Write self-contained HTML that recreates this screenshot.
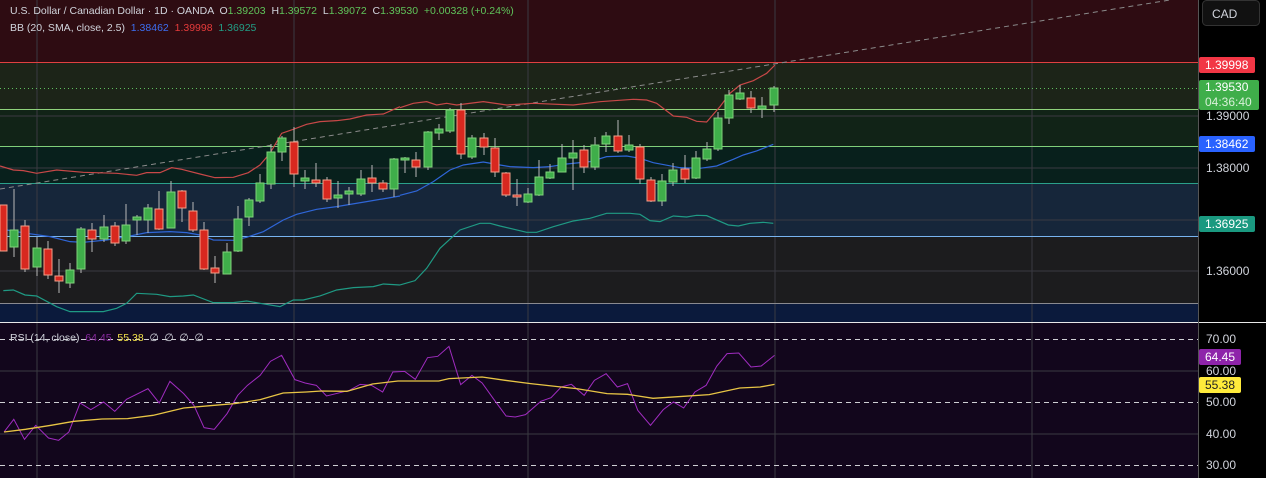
<!DOCTYPE html>
<html><head><meta charset="utf-8"><style>
body{margin:0;width:1266px;height:478px;overflow:hidden;background:#000;font-family:"Liberation Sans",sans-serif;}
svg{position:absolute;left:0;top:0}
.t{position:absolute;font-size:10.5px;color:#d1d4dc;white-space:nowrap}
.lb{position:absolute;left:1199px;font-size:12px;color:#fff;padding:0 0 0 6px;border-radius:2px;line-height:16px;height:16px}
.ax{position:absolute;left:1206px;font-size:12px;color:#d1d4dc;line-height:14px}
.g{fill:#3fae4a;stroke:#7fd27a}.r{fill:#d8281f;stroke:#f3a08a}
.w{stroke:#b8b8b8;stroke-width:1}
</style></head><body>
<svg width="1266" height="478" viewBox="0 0 1266 478">
<rect x="0" y="0" width="1198" height="62" fill="#2e0c12"/>
<rect x="0" y="62" width="1198" height="47" fill="#1c2418"/>
<rect x="0" y="109" width="1198" height="37" fill="#112317"/>
<rect x="0" y="146" width="1198" height="37" fill="#08201c"/>
<rect x="0" y="183" width="1198" height="53" fill="#16263a"/>
<rect x="0" y="236" width="1198" height="67" fill="#1c1c1e"/>
<rect x="0" y="303" width="1198" height="19" fill="#0b1a3c"/>
<rect x="0" y="323" width="1198" height="155" fill="#12061c"/>
<g stroke="#3a3a42" stroke-width="1">
<line x1="37" y1="0" x2="37" y2="478"/><line x1="294" y1="0" x2="294" y2="478"/><line x1="528" y1="0" x2="528" y2="478"/><line x1="775" y1="0" x2="775" y2="478"/><line x1="1032" y1="0" x2="1032" y2="478"/>
<line x1="0" y1="116" x2="1198" y2="116"/><line x1="0" y1="168" x2="1198" y2="168"/><line x1="0" y1="220" x2="1198" y2="220"/><line x1="0" y1="271" x2="1198" y2="271"/>
<line x1="0" y1="371" x2="1198" y2="371"/><line x1="0" y1="434" x2="1198" y2="434"/>
</g>
<line x1="0" y1="62.5" x2="1198" y2="62.5" stroke="#e04040"/>
<line x1="0" y1="109.5" x2="1198" y2="109.5" stroke="#8fd27c"/>
<line x1="0" y1="146.5" x2="1198" y2="146.5" stroke="#7fcf7a"/>
<line x1="0" y1="183.5" x2="1198" y2="183.5" stroke="#2aa08a"/>
<line x1="0" y1="236.5" x2="1198" y2="236.5" stroke="#78b4f0"/>
<line x1="0" y1="303.5" x2="1198" y2="303.5" stroke="#8a8a90"/>
<line x1="0" y1="88.5" x2="1198" y2="88.5" stroke="#5fbf5f" stroke-dasharray="1 3"/>
<line x1="0" y1="189" x2="1170" y2="0" stroke="#8a8a8a" stroke-dasharray="5 4"/>
<g fill="none" stroke-width="1.2">
<g transform="translate(0,40) scale(0.3333)">
<polyline vector-effect="non-scaling-stroke" stroke="#c84848" points="0,378 40,390 70,392 110,400 170,390 250,397 350,400 410,406 440,398 480,398 515,383 545,388 600,402 645,413 700,412 745,398 780,375 810,340 845,280 880,268 920,253 960,245 1010,242 1050,237 1100,225 1150,222 1200,200"/>
<polyline vector-effect="non-scaling-stroke" stroke="#2f66d8" points="20,570 80,580 150,590 210,605 250,607 320,600 380,590 440,578 510,575 560,578 600,585 640,600 700,601 740,592 790,575 850,540 890,523 950,508 1010,500 1100,485 1200,468"/>
<polyline vector-effect="non-scaling-stroke" stroke="#1f9a84" points="10,752 40,750 75,765 110,768 170,800 210,815 310,815 350,805 380,790 410,760 470,763 510,770 550,768 580,765 640,788 700,788 740,783 780,790 840,800 880,780 910,780 960,768 1010,750 1060,743 1120,740 1150,732 1200,735"/>
</g>
<g transform="translate(400,40) scale(0.3333)">
<polyline vector-effect="non-scaling-stroke" stroke="#c84848" points="0,203 40,190 80,185 110,195 140,190 170,195 250,185 320,195 400,190 520,195 600,185 700,178 740,180 770,190 820,228 860,232 890,244 920,246 960,200 990,160 1020,135 1060,122 1100,100 1125,75"/>
<polyline vector-effect="non-scaling-stroke" stroke="#2f66d8" points="0,466 50,453 100,425 150,390 190,375 250,366 300,375 330,380 400,383 450,380 500,372 570,365 620,350 680,348 720,355 760,368 840,383 900,385 950,378 1000,358 1030,345 1070,333 1120,313"/>
<polyline vector-effect="non-scaling-stroke" stroke="#1f9a84" points="0,735 45,722 80,685 120,625 180,570 240,550 270,550 300,558 380,577 410,577 460,560 520,543 570,535 620,520 690,520 720,523 750,542 780,545 820,528 860,531 890,526 920,527 950,540 985,555 1015,558 1050,550 1090,547 1120,550"/>
</g>
</g>
<g class="w">
<line x1="14" y1="189" x2="14" y2="257"/><line x1="25" y1="220" x2="25" y2="272"/><line x1="37" y1="237" x2="37" y2="276"/><line x1="48" y1="241" x2="48" y2="279"/><line x1="59" y1="259" x2="59" y2="293"/><line x1="70" y1="263" x2="70" y2="288"/><line x1="81" y1="227" x2="81" y2="273"/><line x1="92" y1="223" x2="92" y2="252"/><line x1="104" y1="215" x2="104" y2="242"/><line x1="115" y1="222" x2="115" y2="246"/><line x1="126" y1="204" x2="126" y2="244"/><line x1="137" y1="215" x2="137" y2="235"/><line x1="148" y1="204" x2="148" y2="233"/><line x1="159" y1="191" x2="159" y2="230"/><line x1="171" y1="181" x2="171" y2="228"/><line x1="182" y1="190" x2="182" y2="222"/><line x1="193" y1="202" x2="193" y2="232"/><line x1="204" y1="222" x2="204" y2="270"/><line x1="215" y1="256" x2="215" y2="283"/><line x1="227" y1="243" x2="227" y2="274"/><line x1="238" y1="206" x2="238" y2="252"/><line x1="249" y1="198" x2="249" y2="226"/><line x1="260" y1="174" x2="260" y2="203"/><line x1="271" y1="144" x2="271" y2="189"/><line x1="282" y1="136" x2="282" y2="161"/><line x1="294" y1="127" x2="294" y2="187"/><line x1="305" y1="170" x2="305" y2="189"/><line x1="316" y1="163" x2="316" y2="187"/><line x1="327" y1="177" x2="327" y2="202"/><line x1="338" y1="181" x2="338" y2="208"/><line x1="349" y1="187" x2="349" y2="205"/><line x1="361" y1="170" x2="361" y2="196"/><line x1="372" y1="165" x2="372" y2="192"/><line x1="383" y1="180" x2="383" y2="192"/><line x1="394" y1="158" x2="394" y2="197"/>
<line x1="405" y1="157" x2="405" y2="173"/><line x1="416" y1="152" x2="416" y2="177"/><line x1="428" y1="131" x2="428" y2="170"/><line x1="439" y1="124" x2="439" y2="140"/><line x1="450" y1="108" x2="450" y2="133"/><line x1="461" y1="103" x2="461" y2="159"/><line x1="472" y1="135" x2="472" y2="159"/><line x1="484" y1="133" x2="484" y2="155"/><line x1="495" y1="138" x2="495" y2="177"/><line x1="506" y1="172" x2="506" y2="197"/><line x1="517" y1="179" x2="517" y2="206"/><line x1="528" y1="188" x2="528" y2="203"/><line x1="539" y1="160" x2="539" y2="196"/><line x1="550" y1="164" x2="550" y2="179"/><line x1="562" y1="144" x2="562" y2="172"/><line x1="573" y1="140" x2="573" y2="190"/><line x1="584" y1="145" x2="584" y2="173"/><line x1="595" y1="137" x2="595" y2="170"/><line x1="606" y1="132" x2="606" y2="152"/><line x1="618" y1="120" x2="618" y2="153"/><line x1="629" y1="135" x2="629" y2="152"/><line x1="640" y1="144" x2="640" y2="184"/><line x1="651" y1="177" x2="651" y2="202"/><line x1="662" y1="174" x2="662" y2="206"/><line x1="673" y1="163" x2="673" y2="186"/><line x1="685" y1="155" x2="685" y2="183"/><line x1="696" y1="151" x2="696" y2="179"/><line x1="707" y1="142" x2="707" y2="161"/><line x1="718" y1="112" x2="718" y2="151"/><line x1="729" y1="90" x2="729" y2="124"/><line x1="740" y1="85" x2="740" y2="100"/><line x1="751" y1="91" x2="751" y2="113"/><line x1="762" y1="97" x2="762" y2="118"/><line x1="774" y1="86" x2="774" y2="112"/>
</g>
<g stroke-width="1">
<rect class="r" x="0" y="205" width="7" height="46"/>
<rect class="g" x="10" y="230" width="8" height="17"/><rect class="r" x="21" y="226" width="8" height="43"/><rect class="g" x="33" y="248" width="8" height="19"/><rect class="r" x="44" y="249" width="8" height="26"/><rect class="r" x="55" y="276" width="8" height="5"/><rect class="g" x="66" y="270" width="8" height="13"/><rect class="g" x="77" y="229" width="8" height="40"/><rect class="r" x="88" y="230" width="8" height="9"/><rect class="g" x="100" y="227" width="8" height="12"/><rect class="r" x="111" y="226" width="8" height="17"/><rect class="g" x="122" y="225" width="8" height="16"/><rect class="g" x="133" y="217" width="8" height="3"/><rect class="g" x="144" y="208" width="8" height="12"/><rect class="r" x="155" y="209" width="8" height="20"/><rect class="g" x="167" y="192" width="8" height="36"/><rect class="r" x="178" y="191" width="8" height="17"/><rect class="r" x="189" y="211" width="8" height="19"/><rect class="r" x="200" y="230" width="8" height="39"/><rect class="r" x="211" y="268" width="8" height="5"/><rect class="g" x="223" y="252" width="8" height="22"/><rect class="g" x="234" y="219" width="8" height="32"/><rect class="g" x="245" y="200" width="8" height="17"/><rect class="g" x="256" y="183" width="8" height="18"/><rect class="g" x="267" y="152" width="8" height="32"/><rect class="g" x="278" y="138" width="8" height="14"/><rect class="r" x="290" y="142" width="8" height="32"/><rect class="g" x="301" y="178" width="8" height="3"/><rect class="r" x="312" y="180" width="8" height="3"/><rect class="r" x="323" y="180" width="8" height="19"/><rect class="g" x="334" y="195" width="8" height="3"/><rect class="g" x="345" y="191" width="8" height="3"/><rect class="g" x="357" y="179" width="8" height="15"/><rect class="r" x="368" y="178" width="8" height="5"/><rect class="r" x="379" y="183" width="8" height="6"/><rect class="g" x="390" y="159" width="8" height="30"/>
<rect class="g" x="401" y="158" width="8" height="2"/><rect class="r" x="412" y="160" width="8" height="7"/><rect class="g" x="424" y="132" width="8" height="35"/><rect class="g" x="435" y="129" width="8" height="4"/><rect class="g" x="446" y="110" width="8" height="21"/><rect class="r" x="457" y="110" width="8" height="44"/><rect class="g" x="468" y="138" width="8" height="19"/><rect class="r" x="480" y="138" width="8" height="9"/><rect class="r" x="491" y="148" width="8" height="24"/><rect class="r" x="502" y="173" width="8" height="22"/><rect class="r" x="513" y="195" width="8" height="2"/><rect class="g" x="524" y="194" width="8" height="8"/><rect class="g" x="535" y="177" width="8" height="18"/><rect class="g" x="546" y="172" width="8" height="6"/><rect class="g" x="558" y="158" width="8" height="14"/><rect class="g" x="569" y="153" width="8" height="5"/><rect class="r" x="580" y="150" width="8" height="17"/><rect class="g" x="591" y="145" width="8" height="22"/><rect class="g" x="602" y="136" width="8" height="8"/><rect class="r" x="614" y="136" width="8" height="15"/><rect class="g" x="625" y="145" width="8" height="5"/><rect class="r" x="636" y="147" width="8" height="32"/><rect class="r" x="647" y="180" width="8" height="21"/><rect class="g" x="658" y="181" width="8" height="20"/><rect class="g" x="669" y="170" width="8" height="12"/><rect class="r" x="681" y="169" width="8" height="10"/><rect class="g" x="692" y="158" width="8" height="20"/><rect class="g" x="703" y="149" width="8" height="10"/><rect class="g" x="714" y="118" width="8" height="31"/><rect class="g" x="725" y="95" width="8" height="23"/><rect class="g" x="736" y="93" width="8" height="6"/><rect class="r" x="747" y="98" width="8" height="10"/><rect class="g" x="758" y="106" width="8" height="3"/><rect class="g" x="770" y="88" width="8" height="17"/>
</g>
<g stroke="#cfcfd4" stroke-dasharray="5 4"><line x1="0" y1="339.5" x2="1198" y2="339.5"/><line x1="0" y1="402.5" x2="1198" y2="402.5"/><line x1="0" y1="465.5" x2="1198" y2="465.5"/></g>
<g fill="none" transform="translate(0,322) scale(0.5102,0.3333)">
<polyline vector-effect="non-scaling-stroke" stroke="#a02cc0" stroke-width="1" points="8,330 27,292 48,352 70,310 95,348 115,355 135,330 157,243 178,263 203,240 225,268 248,232 290,200 312,243 333,178 360,215 380,250 400,317 420,322 445,275 466,220 485,190 510,160 530,118 552,100 578,173 598,183 620,190 640,222 685,205 706,187 728,190 750,210 770,150 793,148 814,172 838,107 858,103 880,73 903,188 925,160 945,183 967,230 992,282 1010,285 1030,278 1060,238 1080,227 1100,195 1120,187 1145,220 1165,175 1188,155 1210,195 1230,185 1250,265 1275,310 1300,263 1320,240 1340,258 1362,210 1384,190 1405,132 1425,95 1448,93 1472,135 1492,132 1518,100"/>
<polyline vector-effect="non-scaling-stroke" stroke="#e8c545" stroke-width="1.3" points="8,330 50,322 100,310 145,298 200,291 250,290 300,280 360,258 420,250 460,245 510,233 555,213 600,210 630,207 680,208 730,186 780,177 860,177 880,170 945,165 990,175 1040,185 1100,195 1130,200 1190,215 1230,217 1280,229 1340,223 1390,218 1450,198 1490,195 1518,187"/>
</g>
<line x1="0" y1="322.5" x2="1266" y2="322.5" stroke="#e8e8e8"/>
<line x1="1198.5" y1="0" x2="1198.5" y2="478" stroke="#555"/>
<rect x="1202.5" y="0.5" width="57" height="25" rx="4" fill="#111" stroke="#333"/>
</svg>
<div class="t" style="left:10px;top:5px">U.S. Dollar / Canadian Dollar · 1D · OANDA &nbsp;O<span style="color:#5fc45a">1.39203</span> &nbsp;H<span style="color:#5fc45a">1.39572</span> &nbsp;L<span style="color:#5fc45a">1.39072</span> &nbsp;C<span style="color:#5fc45a">1.39530</span> &nbsp;<span style="color:#5fc45a">+0.00328 (+0.24%)</span></div>
<div class="t" style="left:10px;top:22px">BB (20, SMA, close, 2.5) &nbsp;<span style="color:#3d6ef0">1.38462</span> &nbsp;<span style="color:#e53b3b">1.39998</span> &nbsp;<span style="color:#229e86">1.36925</span></div>
<div class="t" style="left:10px;top:332px;font-size:10.5px">RSI (14, close) &nbsp;<span style="color:#8a2aa0">64.45</span> &nbsp;<span style="color:#f2e14a">55.38</span> &nbsp;∅ &nbsp;∅ &nbsp;∅ &nbsp;∅</div>
<div class="t" style="left:1212px;top:7px;font-size:12px">CAD</div>
<div class="ax" style="top:109px">1.39000</div>
<div class="ax" style="top:161px">1.38000</div>
<div class="ax" style="top:264px">1.36000</div>
<div class="ax" style="top:332px">70.00</div>
<div class="ax" style="top:364px">60.00</div>
<div class="ax" style="top:395px">50.00</div>
<div class="ax" style="top:427px">40.00</div>
<div class="ax" style="top:458px">30.00</div>
<div class="lb" style="top:57px;width:50px;background:#f23645">1.39998</div>
<div class="lb" style="top:80px;width:54px;height:30px;background:#3fae4a;line-height:15px">1.39530<br><span style="color:#d8f0d8">04:36:40</span></div>
<div class="lb" style="top:136px;width:50px;background:#2962ff">1.38462</div>
<div class="lb" style="top:216px;width:50px;background:#1a9980">1.36925</div>
<div class="lb" style="top:349px;width:36px;background:#8e24aa">64.45</div>
<div class="lb" style="top:377px;width:36px;background:#ffeb3b;color:#222">55.38</div>
</body></html>
